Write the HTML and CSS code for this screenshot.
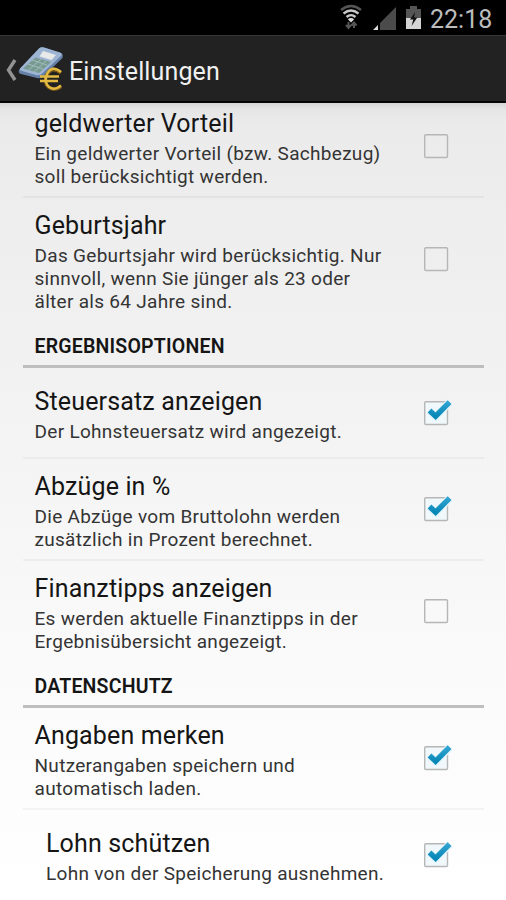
FILE: index.html
```html
<!DOCTYPE html>
<html lang="de">
<head>
<meta charset="utf-8">
<title>Einstellungen</title>
<link rel="stylesheet" href="styles.css">
</head>
<body>
<svg class="defs" width="0" height="0">
  <defs>
    <linearGradient id="tick" x1="0" y1="0" x2="0" y2="1"><stop offset="0" stop-color="#32a3d0"/><stop offset="1" stop-color="#0788b8"/></linearGradient>
    <symbol id="off" viewBox="0 0 32 32"><rect x="2.7" y="4.7" width="22.8" height="22.8" rx="1.2" fill="none" stroke="#b6b6b6" stroke-width="1.4"/></symbol>
    <symbol id="on" viewBox="0 0 32 32"><rect x="2.7" y="4.7" width="22.8" height="22.8" rx="1.2" fill="#f1f8fb" stroke="#b6b6b6" stroke-width="1.4"/><path d="M7.5 13.8L13.600 19.400L28 5.2" fill="none" stroke="#e4f5fb" stroke-width="8"/><path d="M7.5 13.6L13.600 19.200L27.600 5.200" fill="none" stroke="url(#tick)" stroke-width="5.4"/></symbol>
  </defs>
</svg>
<header class="status">
  <svg width="24" height="30" viewBox="0 0 24 30" fill="none">
    <path d="M1 8Q11 0 21 8" stroke="#555" stroke-width="2.5"/>
    <path d="M3.5 11.5Q11 5.5 18.5 11.5M6.5 15Q11 11.2 15.5 15" stroke="#c8c8c8" stroke-width="2.3"/>
    <path d="M7.8 17.3Q11 14.6 14.2 17.3L11 20.5Z" fill="#ddd"/>
    <path d="M8.5 20V25M6 23L8.5 26L11 23M14 26V21M11.5 23.500L14 20.5L16.500 23.500" stroke="#555" stroke-width="2"/>
  </svg>
  <svg class="signal" width="23" height="24" viewBox="0 0 23 24"><path d="M0 23L5 18V23Z" fill="#ddd"/><path d="M7 16L23 0V23H7Z" fill="#4b4b4b"/></svg>
  <svg class="battery" width="15" height="24" viewBox="0 0 15 24"><path d="M4 0H11V3H15V12H0V3H4Z" fill="#555"/><path d="M0 12H15V23H0Z" fill="#d4d4d4"/><path d="M9.2 6L4 13.5H7.3L5.5 20L11.3 11.5H8Z" fill="#111"/></svg>
  <span class="clock">22:18</span>
</header>
<nav class="bar">
  <svg class="back" width="11" height="22" viewBox="0 0 11 22"><path d="M9 1L2.5 11L9 21" fill="none" stroke="#929292" stroke-width="3.4"/></svg>
  <svg width="48" height="48" viewBox="0 0 48 48">
    <path d="M2 24L22 2.5Q24 .8 27 1.5L44 7Q46.500 8 45.5 12L25.500 31Q23 33 20 32L4 28Q1 27 2 24Z" fill="#6681a8"/>
    <path d="M3 22.500L22 2.500Q24 .8 27 1.500L43 6.500Q46 8 44 10L24.500 28Q22 30 19 29L5 25Q2 24 3 22.500Z" fill="#9db4d3"/>
    <path d="M26 5L39 9L34.500 14L22.500 10.500Z" fill="#e7eae8"/>
    <path d="M18.500 11.500L34 16L22 27L6 22.500Z" fill="#789b91"/>
    <path d="M15 14L30 19M11 18L26 23M24 13L11.500 24M29 15L17 26" stroke="#a1bbbc" stroke-width="1"/>
    <path d="M44 27Q35 19.500 30 28.500Q26 37 32 41.500Q38 45.500 44 40.500" fill="none" stroke="#795716" stroke-width="3.6"/>
    <path d="M44 26Q35 18.500 30 28Q26.500 36 32 41Q38 45 44 39.500M23 30.500H42M23 35H41" fill="none" stroke="#e3bb43" stroke-width="2.4"/>
  </svg>
  <h1>Einstellungen</h1>
</nav>
<main>
  <section class="row first"><div class="text"><h2>geldwerter Vorteil</h2><p>Ein geldwerter Vorteil (bzw. Sachbezug)<br>soll berücksichtigt werden.</p></div><svg class="check"><use href="#off"/></svg></section>
  <section class="row tall last"><div class="text"><h2>Geburtsjahr</h2><p>Das Geburtsjahr wird berücksichtig. Nur<br>sinnvoll, wenn Sie jünger als 23 oder<br>älter als 64 Jahre sind.</p></div><svg class="check"><use href="#off"/></svg></section>
  <h3>ERGEBNISOPTIONEN</h3>
  <section class="row single"><div class="text"><h2>Steuersatz anzeigen</h2><p>Der Lohnsteuersatz wird angezeigt.</p></div><svg class="check"><use href="#on"/></svg></section>
  <section class="row"><div class="text"><h2>Abzüge in %</h2><p>Die Abzüge vom Bruttolohn werden<br>zusätzlich in Prozent berechnet.</p></div><svg class="check"><use href="#on"/></svg></section>
  <section class="row tips last"><div class="text"><h2>Finanztipps anzeigen</h2><p>Es werden aktuelle Finanztipps in der<br>Ergebnisübersicht angezeigt.</p></div><svg class="check"><use href="#off"/></svg></section>
  <h3>DATENSCHUTZ</h3>
  <section class="row"><div class="text"><h2>Angaben merken</h2><p>Nutzerangaben speichern und<br>automatisch laden.</p></div><svg class="check"><use href="#on"/></svg></section>
  <section class="row single last child"><div class="text"><h2>Lohn schützen</h2><p>Lohn von der Speicherung ausnehmen.</p></div><svg class="check"><use href="#on"/></svg></section>
</main>
</body>
</html>
```
FILE: styles.css
```css
* { box-sizing: border-box; margin: 0; }
body {
  width: 506px;
  height: 900px;
  overflow: hidden;
  display: flex;
  flex-direction: column;
  font-family: Roboto, sans-serif;
  color: #151515;
}
.defs { position: absolute; }
.status {
  height: 35px;
  flex: none;
  background: #000;
  display: flex;
  justify-content: flex-end;
  padding: 2px 14px 0 0;
}
.signal { margin: 5px 0 0 9px; }
.battery { margin: 4px 0 0 10px; }
.clock {
  width: 62px;
  margin-left: 9px;
  font-size: 25px;
  line-height: 35px;
  color: #bcbcbc;
}
.bar {
  height: 68px;
  flex: none;
  background: #222;
  border-top: 1px solid #363636;
  border-bottom: 2px solid #050505;
  display: flex;
  align-items: center;
  padding: 2px 0 0 6px;
}
.bar h1 {
  margin-left: 4px;
  padding-top: 4px;
  font-size: 25px;
  line-height: 36px;
  font-weight: 400;
  letter-spacing: .12px;
  color: #f0f0f0;
}
main {
  flex: 1;
  padding: 0 22px 0 23px;
  background: linear-gradient(#d6d6d6 0, #e5e5e5 6px, #ebebeb 20px, #f3f3f3 40%, #fafafa 70%, #fff 100%);
}
.row {
  height: 102px;
  padding: 9px 30px 9px 11.5px;
  border-bottom: 2px solid rgba(0, 0, 0, .04);
  display: flex;
  align-items: center;
  justify-content: space-between;
}
.text { padding-top: 2px; }
.row.first { height: 95px; padding-top: 2px; }
.row.last { height: 101px; border-bottom: 0; }
.row.tall { height: 123px; padding-bottom: 10px; }
.row.tips { padding-bottom: 11px; }
.row.single { height: 91px; }
.row.child { height: 89px; padding-left: 23px; }
h2 {
  font-size: 25px;
  line-height: 36px;
  font-weight: 400;
  letter-spacing: .15px;
  white-space: nowrap;
}
p {
  font-size: 19px;
  line-height: 23px;
  letter-spacing: .3px;
  color: #343434;
  white-space: nowrap;
}
.check { width: 32px; height: 32px; flex: none; }
h3 {
  height: 47px;
  padding: 14px 11.5px 0;
  border-bottom: 3px solid #bebebe;
  font-size: 19.5px;
  line-height: 24px;
  font-weight: 600;
  letter-spacing: .2px;
}
.tips + h3 { height: 46px; padding-top: 13px; }
```
